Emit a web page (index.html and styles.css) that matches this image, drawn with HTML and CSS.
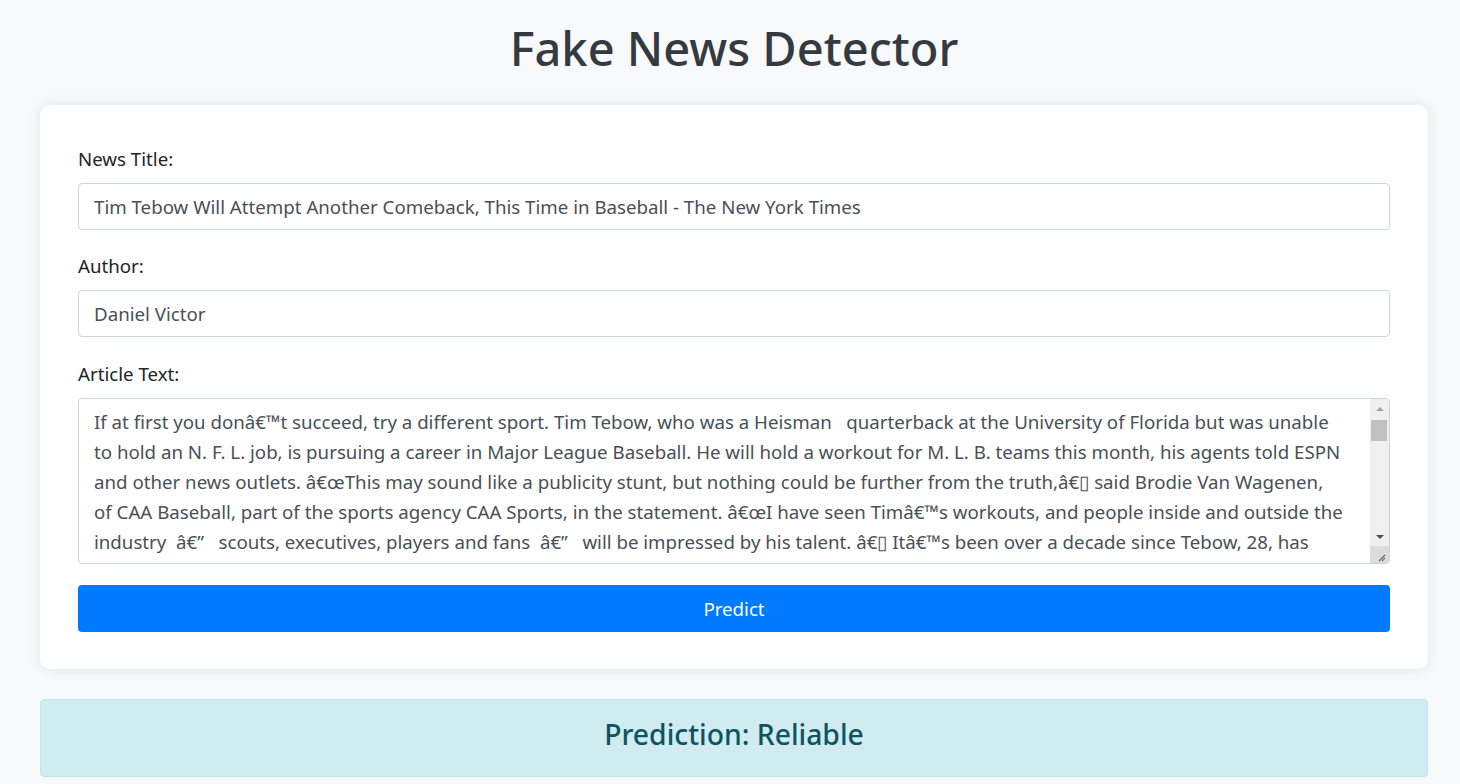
FILE: index.html
```html
<!DOCTYPE html>
<html lang="en">
<head>
<meta charset="utf-8">
<title>Fake News Detector</title>
<link rel="stylesheet" href="styles.css">
</head>
<body>
<main class="page">
  <h1 class="title">Fake News Detector</h1>
  <form class="card">
    <div class="group">
      <label class="label" for="title">News Title:</label>
      <input class="field" id="title" type="text" value="Tim Tebow Will Attempt Another Comeback, This Time in Baseball - The New York Times">
    </div>
    <div class="group">
      <label class="label" for="author">Author:</label>
      <input class="field" id="author" type="text" value="Daniel Victor">
    </div>
    <div class="group last">
      <label class="label" for="text">Article Text:</label>
      <div class="area-wrap">
        <textarea class="field area" id="text" spellcheck="false">If at first you donâ€™t succeed, try a different sport. Tim Tebow, who was a Heisman   quarterback at the University of Florida but was unable
to hold an N. F. L. job, is pursuing a career in Major League Baseball. He will hold a workout for M. L. B. teams this month, his agents told ESPN
and other news outlets. â€œThis may sound like a publicity stunt, but nothing could be further from the truth,â€▯ said Brodie Van Wagenen,
of CAA Baseball, part of the sports agency CAA Sports, in the statement. â€œI have seen Timâ€™s workouts, and people inside and outside the
industry  â€”   scouts, executives, players and fans  â€”   will be impressed by his talent. â€▯ Itâ€™s been over a decade since Tebow, 28, has
played baseball full time, which means a comeback would be an uphill battle for a player expected to sign only a minor league deal. Tebow didnâ€™t play baseball in college, but he batted. 494 in his junior year at Allen D. Nease High School in Ponte Vedra, Fla. and earned   honors. Few athletes have successfully played in both the N. F. L. and Major League Baseball. Deion Sanders and Bo Jackson were the most accomplished, both making the Pro Bowl and the M. L. B. All-Star Game.</textarea>
        <div class="sb" aria-hidden="true">
          <div class="sb-btn"><span class="tri-up"></span></div>
          <div class="sb-track"><div class="sb-thumb"></div></div>
          <div class="sb-btn"><span class="tri-down"></span></div>
          <div class="sb-corner">
            <svg width="19" height="17" viewBox="0 0 19 17"><path d="M15 9 L9 15 M15 12 L12 15" stroke="#6b6b6b" stroke-width="1.2" fill="none"/></svg>
          </div>
        </div>
      </div>
    </div>
    <button class="btn" type="button">Predict</button>
  </form>
  <div class="alert">Prediction: Reliable</div>
</main>
</body>
</html>
```
FILE: styles.css
```css
html, body {
  margin: 0;
  padding: 0;
}
body {
  background: #f8f9fa;
  font-family: "Noto Sans", "Open Sans", sans-serif;
  color: #212529;
}
.page {
  margin-left: 40px;
  width: 1388px;
  display: flex;
  flex-direction: column;
}
.title {
  margin: 20px 0 29px;
  font-size: 47px;
  line-height: 56px;
  font-weight: 500;
  text-align: center;
  color: #343a40;
}
.card {
  background: #fff;
  border-radius: 10px;
  box-shadow: 0 0 14px rgba(0, 0, 0, 0.09);
  padding: 39px 38px 37px;
  display: flex;
  flex-direction: column;
}
.group {
  display: flex;
  flex-direction: column;
  margin-bottom: 21px;
}
.group.last {
  margin-top: 1px;
  margin-bottom: 21px;
}
.label {
  font-size: 18.7px;
  line-height: 30px;
  margin-bottom: 9px;
  color: #212529;
}
.field {
  box-sizing: border-box;
  width: 100%;
  height: 47px;
  margin: 0;
  padding: 0 15px;
  border: 1px solid #ced4da;
  border-radius: 4px;
  font-family: inherit;
  font-size: 18.7px;
  color: #495057;
  background: #fff;
  outline: none;
}
.area-wrap {
  position: relative;
  display: flex;
}
.area {
  display: block;
  height: 166px;
  padding: 8px 36px 8px 15px;
  line-height: 30px;
  resize: none;
  overflow: hidden;
}
.sb {
  position: absolute;
  top: 1px;
  right: 1px;
  bottom: 1px;
  width: 19px;
  background: #f0f0f0;
  border-radius: 0 3px 3px 0;
  display: flex;
  flex-direction: column;
}
.sb-btn {
  height: 19px;
  display: flex;
  align-items: center;
  justify-content: center;
}
.tri-up {
  width: 0;
  height: 0;
  border-left: 4px solid transparent;
  border-right: 4px solid transparent;
  border-bottom: 4px solid #a3a3a3;
}
.tri-down {
  width: 0;
  height: 0;
  border-left: 4px solid transparent;
  border-right: 4px solid transparent;
  border-top: 4px solid #505050;
}
.sb-track {
  flex: 1;
  padding: 2px 2px 0 1px;
}
.sb-thumb {
  height: 21px;
  background: #c1c1c1;
}
.sb-corner {
  height: 17px;
  background: #dcdcdc;
  border-radius: 0 0 3px 0;
}
.sb-corner svg {
  display: block;
}
.btn {
  height: 47px;
  border: 0;
  border-radius: 4px;
  background: #007bff;
  color: #fff;
  font-family: inherit;
  font-size: 18.7px;
  line-height: 30px;
  cursor: pointer;
}
.alert {
  margin-top: 30px;
  height: 78px;
  box-sizing: border-box;
  padding-bottom: 8px;
  border: 1px solid #bee5eb;
  border-radius: 4px;
  background: #d1ecf1;
  color: #0c5460;
  font-size: 28.3px;
  font-weight: 500;
  line-height: 68px;
  text-align: center;
}
```
